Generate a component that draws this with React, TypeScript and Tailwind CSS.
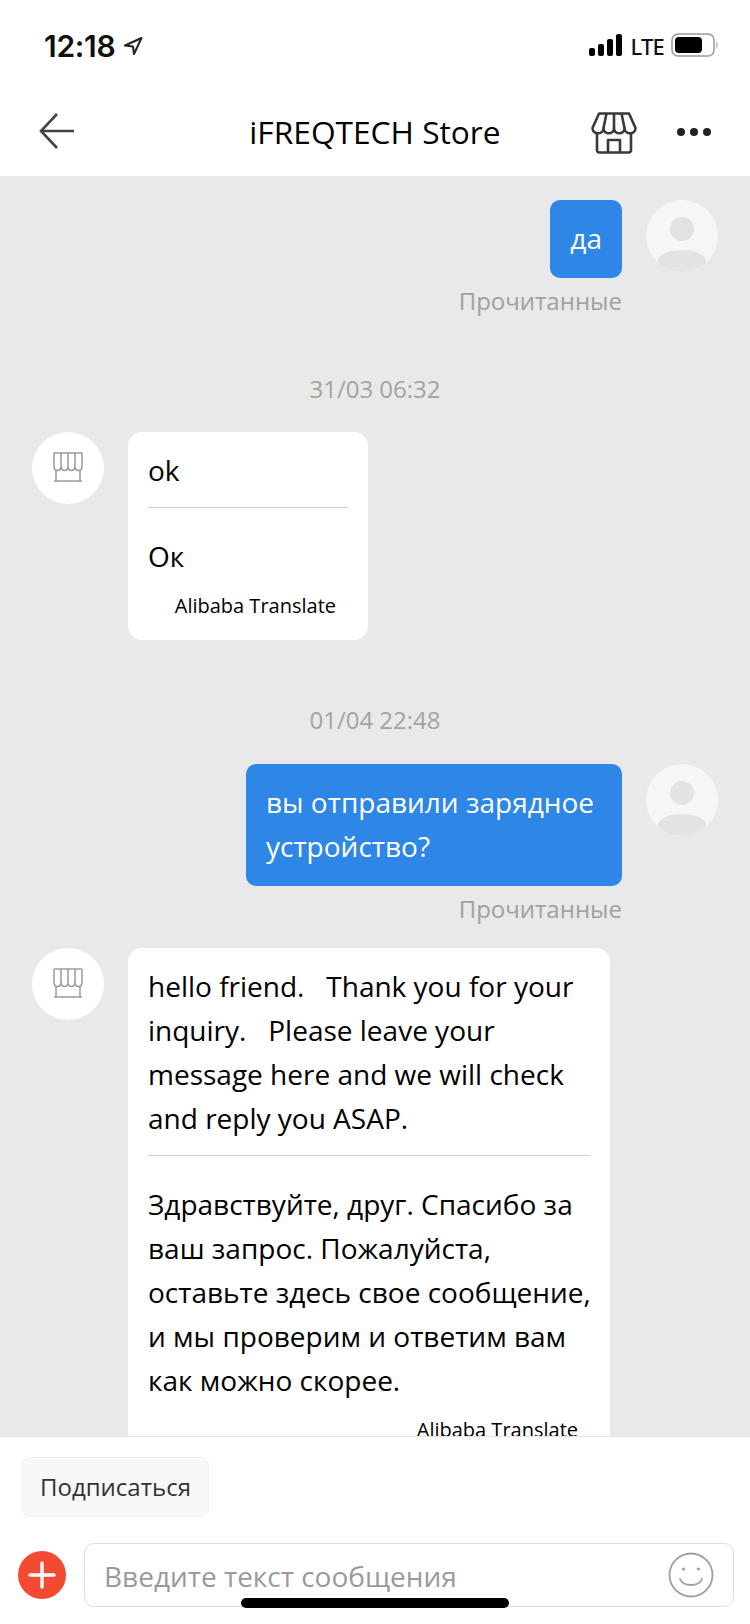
import React from "react";

const font = "font-['Open_Sans','Noto_Sans',sans-serif]";

function UserAvatar() {
    return (
        <div className="relative w-[72px] h-[72px] shrink-0 rounded-full bg-[#f6f6f6] overflow-hidden">
            <div className="absolute left-[24px] top-[17px] w-[24px] h-[24px] rounded-full bg-[#e3e3e3]" />
            <div className="absolute left-[12px] top-[50px] w-[48px] h-[22px] rounded-[50%] bg-[#e3e3e3]" />
        </div>
    );
}

function StoreAvatar() {
    return (
        <div className="w-[72px] h-[72px] shrink-0 rounded-full bg-white flex items-center justify-center">
            <svg width="30" height="30" viewBox="0 0 30 30" fill="none" stroke="#9a9a9a" strokeWidth="1.5" className="mb-[2px]">
                <path d="M1 1H29M1 1V14C1 20 8 20 8 14V1M8 14C8 20 15 20 15 14V1M15 14C15 20 22 20 22 14V1M22 14C22 20 29 20 29 14V1M3 18V29H27V18M1 29H29" />
            </svg>
        </div>
    );
}

function Sent({ children, wide }: { children: React.ReactNode; wide?: boolean }) {
    return (
        <div className="flex justify-end gap-[24px] pr-[32px]">
            <div className="flex flex-col items-end">
                <div className={`bg-[#2e86e6] text-white rounded-[10px] text-[28px] leading-[44px] pt-[16px] pb-[18px] px-[20px] ${wide ? "w-[376px]" : ""}`}>
                    {children}
                </div>
                <div className="text-[#a0a0a0] text-[24px] leading-[30px] mt-[8px]">Прочитанные</div>
            </div>
            <UserAvatar />
        </div>
    );
}

function Stamp({ children }: { children: React.ReactNode }) {
    return <div className="text-center text-[#a3a3a3] text-[24px] leading-[30px]">{children}</div>;
}

function Received({ original, translated, width }: { original: React.ReactNode; translated: React.ReactNode; width: string }) {
    return (
        <div className="flex gap-[24px] pl-[32px]">
            <StoreAvatar />
            <div className={`bg-white rounded-[14px] px-[20px] pt-[16px] pb-[20px] text-black text-[28px] leading-[44px] ${width}`}>
                <div className="pb-[15px] border-b border-[#cfcfcf]">{original}</div>
                <div className="pt-[26px] whitespace-nowrap">{translated}</div>
                <div className="text-right text-[20px] leading-[28px] mt-[14px] pr-[12px]">Alibaba Translate</div>
            </div>
        </div>
    );
}

export default function App() {
    return (
        <div className={`relative flex flex-col w-[750px] h-[1624px] bg-white overflow-hidden ${font}`}>
            {/* Status bar */}
            <div className="h-[88px] shrink-0 flex items-start justify-between pl-[44px] pr-[31px] pt-[28px]">
                <div className="flex items-center gap-[8px]">
                    <span className="text-[#111] text-[30px] leading-[36px] font-semibold font-['Inter',sans-serif] tracking-[-0.3px]">12:18</span>
                    <svg width="20" height="20" viewBox="0 0 20 20" fill="none" stroke="#222" strokeWidth="2" strokeLinejoin="round">
                        <path d="M18.5 2L2 9.5L10 10.5L11 18L18.5 2Z" />
                    </svg>
                </div>
                <div className="flex items-center gap-[7px] h-[36px]">
                    <svg width="34" height="22" viewBox="0 0 34 22" fill="#000" className="-mt-[2px]">
                        <rect x="0" y="14" width="6" height="8" rx="2" />
                        <rect x="9" y="10" width="6" height="12" rx="2" />
                        <rect x="18" y="5" width="6" height="17" rx="2" />
                        <rect x="27" y="0" width="6" height="22" rx="2" />
                    </svg>
                    <span className="text-[#111] text-[22px] leading-[36px] font-medium font-['Noto_Sans',sans-serif] tracking-[-0.8px]">LTE</span>
                    <svg width="48" height="24" viewBox="0 0 48 24" fill="none" className="-mt-[2px]">
                        <rect x="1" y="1" width="42" height="22" rx="6" stroke="#999" strokeWidth="1.5" />
                        <rect x="4" y="4" width="27" height="16" rx="4" fill="#000" />
                        <path d="M45.5 8.5C47 9.5 47 14.5 45.5 15.5Z" fill="#999" />
                    </svg>
                </div>
            </div>

            {/* Header */}
            <div className="relative h-[88px] shrink-0 flex items-center justify-center">
                <svg width="36" height="36" viewBox="0 0 36 36" fill="none" stroke="#444" strokeWidth="2.6" className="absolute left-[39px] top-[25px]">
                    <path d="M18 1L2 18L18 35M2 18H35" />
                </svg>
                <div className="text-black text-[31.7px] leading-[44px]">iFREQTECH Store</div>
                <svg width="46" height="42" viewBox="0 0 46 42" fill="none" stroke="#3a3a3a" strokeWidth="2.6" strokeLinejoin="round" className="absolute left-[591px] top-[24px]">
                    <path d="M8 1.5H38L44.5 16C44.5 23 33.5 23 33.5 16C33.5 23 23 23 23 16C23 23 12.5 23 12.5 16C12.5 23 1.5 23 1.5 16L8 1.5Z" />
                    <path d="M12.5 16L15.5 1.5M23 16V1.5M33.5 16L30.5 1.5" />
                    <path d="M6 21V38C6 39.5 7 40.5 8.5 40.5H37.5C39 40.5 40 39.5 40 38V21" />
                    <path d="M17 40V28H29V40" />
                </svg>
                <div className="absolute left-[677px] top-[40px] flex gap-[5px]">
                    <div className="w-[8px] h-[8px] rounded-full bg-[#222]" />
                    <div className="w-[8px] h-[8px] rounded-full bg-[#222]" />
                    <div className="w-[8px] h-[8px] rounded-full bg-[#222]" />
                </div>
            </div>

            {/* Messages */}
            <div className="flex-1 min-h-0 overflow-hidden bg-[#e9e9e9] pt-[24px] flex flex-col">
                <Sent>да</Sent>
                <div className="mt-[58px]"><Stamp>31/03 06:32</Stamp></div>
                <div className="mt-[28px]">
                    <Received original="ok" translated="Ок" width="w-[240px]" />
                </div>
                <div className="mt-[65px]"><Stamp>01/04 22:48</Stamp></div>
                <div className="mt-[29px]">
                    <Sent wide>вы отправили зарядное устройство?</Sent>
                </div>
                <div className="mt-[24px]">
                    <Received
                        width="w-[482px]"
                        original={<>hello friend. &nbsp; Thank you for your inquiry. &nbsp; Please leave your message here and we will check and reply you ASAP.</>}
                        translated={<>Здравствуйте, друг. Спасибо за<br />ваш запрос. Пожалуйста,<br />оставьте здесь свое сообщение,<br />и мы проверим и ответим вам<br />как можно скорее.</>}
                    />
                </div>
            </div>

            {/* Bottom panel */}
            <div className="h-[188px] shrink-0 bg-white border-t border-[#e4e4e4] flex flex-col">
                <div className="pl-[22px] pt-[20px]">
                    <div className="inline-block h-[60px] px-[17px] rounded-[8px] bg-[#f8f8f8] border border-[#f1f1f1] text-[#333] text-[24px] leading-[58px]">Подписаться</div>
                </div>
                <div className="flex items-center mt-[26px] pl-[18px]">
                    <div className="w-[48px] h-[48px] rounded-full bg-[#f44a32] flex items-center justify-center shrink-0">
                        <svg width="28" height="28" viewBox="0 0 28 28" stroke="#fff" strokeWidth="3.4" strokeLinecap="round">
                            <path d="M14 2V26M2 14H26" />
                        </svg>
                    </div>
                    <div className="ml-[18px] w-[650px] h-[64px] rounded-[10px] border border-[#dedede] flex items-center justify-between pl-[19px] pr-[19px]">
                        <span className="text-[#9a9a9a] text-[28px] leading-[40px] mt-[2px]">Введите текст сообщения</span>
                        <svg width="46" height="46" viewBox="0 0 46 46" fill="none" stroke="#a0a0a0" strokeWidth="1.8" strokeLinecap="round">
                            <circle cx="23" cy="23" r="21.5" />
                            <path d="M12 27C15 35 31 35 34 27" />
                            <circle cx="15.5" cy="17" r="1.6" fill="#a0a0a0" stroke="none" />
                            <circle cx="30.5" cy="17" r="1.6" fill="#a0a0a0" stroke="none" />
                        </svg>
                    </div>
                </div>
            </div>

            {/* Home indicator */}
            <div className="absolute left-[241px] top-[1598px] w-[268px] h-[10px] rounded-full bg-black" />
        </div>
    );
}
